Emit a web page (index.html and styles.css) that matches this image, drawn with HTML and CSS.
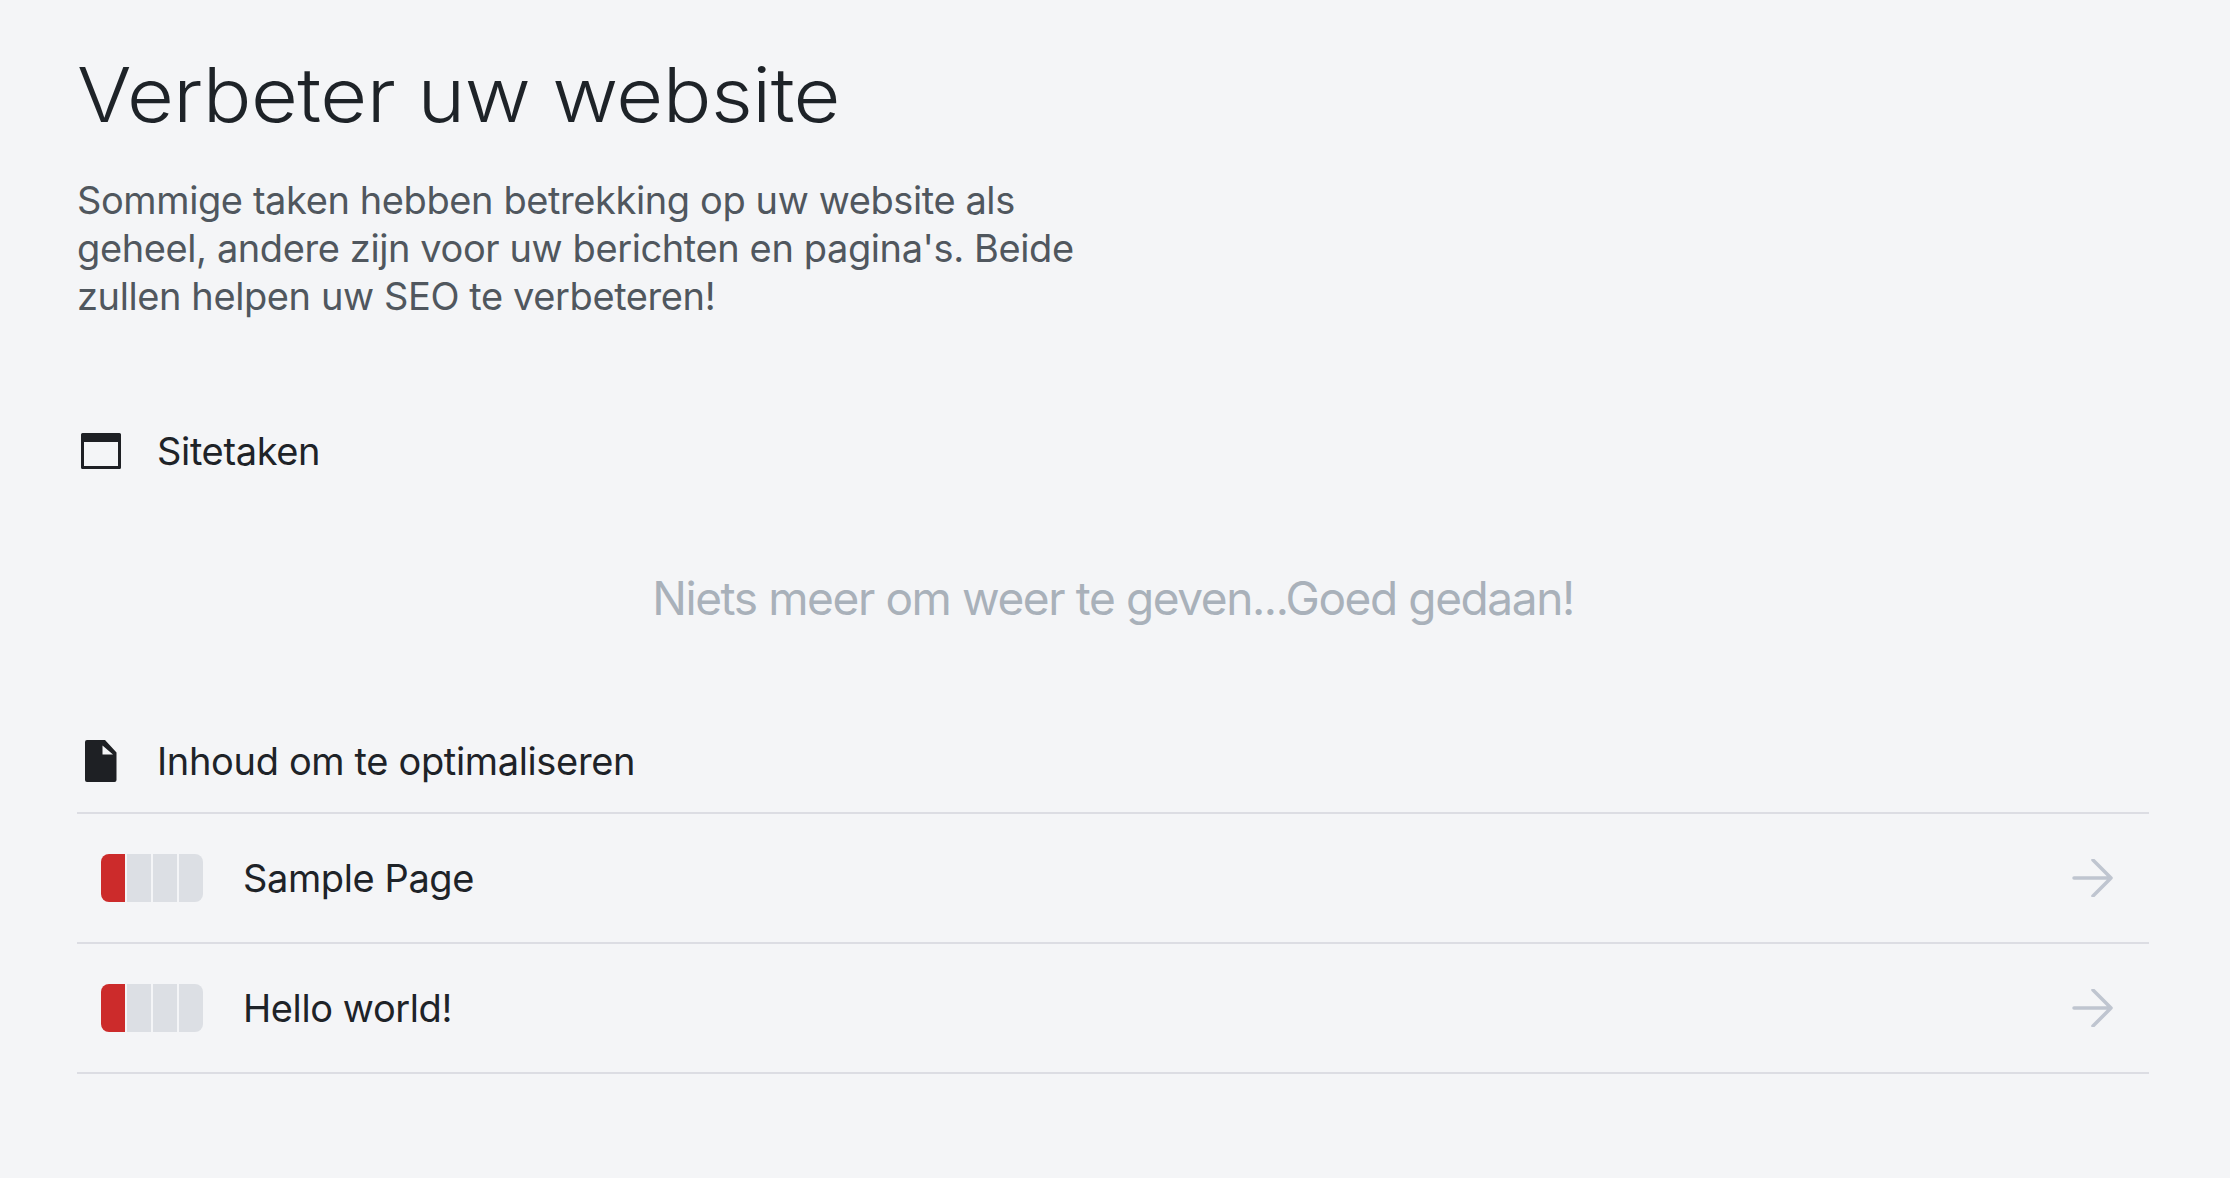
FILE: index.html
```html
<!DOCTYPE html>
<html lang="nl">
<head>
<meta charset="utf-8">
<title>Verbeter uw website</title>
<link rel="stylesheet" href="styles.css">
</head>
<body>
<main class="page">
  <h1 class="title">Verbeter uw website</h1>
  <p class="intro">Sommige taken hebben betrekking op uw website als geheel, andere zijn voor uw berichten en pagina's. Beide zullen helpen uw SEO te verbeteren!</p>

  <section class="section section-site">
    <h2 class="section-head">
      <span class="section-icon">
        <svg width="40" height="36" viewBox="0 0 40 36"><path fill="#1e2024" fill-rule="evenodd" d="M1.5 0h37A1.5 1.5 0 0 1 40 1.500v33a1.500 1.500 0 0 1-1.500 1.500h-37A1.500 1.500 0 0 1 0 34.500v-33A1.500 1.500 0 0 1 1.500 0zM3 9v24h34V9z"/></svg>
      </span>
      Sitetaken
    </h2>
    <p class="empty">Niets meer om weer te geven...Goed gedaan!</p>
  </section>

  <section class="section section-content">
    <h2 class="section-head section-head-ruled">
      <span class="section-icon section-icon-doc">
        <svg width="32" height="42" viewBox="0 0 32 42"><path fill="#1e2024" fill-rule="evenodd" d="M2 0h18l11.500 12.500V40a2 2 0 0 1-2 2H2a2 2 0 0 1-2-2V2a2 2 0 0 1 2-2zM17.500 5.500v9h10.500z"/></svg>
      </span>
      Inhoud om te optimaliseren
    </h2>
    <ul class="rows">
      <li class="row">
        <span class="score"><span class="seg seg-red"></span><span class="seg"></span><span class="seg"></span><span class="seg"></span></span>
        <span class="row-name">Sample Page</span>
        <svg class="arrow" width="42" height="38" viewBox="0 0 42 38"><path fill="none" stroke="#bfc5d0" stroke-width="3.5" stroke-linecap="round" stroke-linejoin="round" d="M2 19h37M21 1l18 18-18 18"/></svg>
      </li>
      <li class="row">
        <span class="score"><span class="seg seg-red"></span><span class="seg"></span><span class="seg"></span><span class="seg"></span></span>
        <span class="row-name">Hello world!</span>
        <svg class="arrow" width="42" height="38" viewBox="0 0 42 38"><path fill="none" stroke="#bfc5d0" stroke-width="3.5" stroke-linecap="round" stroke-linejoin="round" d="M2 19h37M21 1l18 18-18 18"/></svg>
      </li>
    </ul>
  </section>
</main>
</body>
</html>
```
FILE: styles.css
```css
* { box-sizing: border-box; }
html, body { margin: 0; height: 100%; }
body {
  background: #f4f5f7;
  color: #1e2328;
  font-family: Inter, "Liberation Sans", sans-serif;
  overflow: hidden;
}
.page { padding: 47px 81px 0 77px; }
.title {
  margin: 0;
  font-family: Inter, "Liberation Sans", sans-serif;
  font-size: 75px;
  font-weight: 300;
  line-height: 96px;
  letter-spacing: -0.5px;
  color: #1e2328;
  transform: scaleX(1.08);
  transform-origin: left center;
}
.intro {
  margin: 33px 0 0;
  width: 1000px;
  font-size: 38px;
  line-height: 48px;
  letter-spacing: -0.4px;
  color: #50575e;
}
.section-site { margin-top: 107px; }
.section-head {
  display: flex;
  align-items: center;
  margin: 0;
  font-size: 38px;
  line-height: 48px;
  font-weight: 400;
  letter-spacing: -0.35px;
}
.section-icon {
  flex: none;
  width: 80px;
  display: flex;
  justify-content: flex-start;
  padding-left: 4px;
}
.section-icon-doc { padding-left: 8px; }
.empty {
  margin: 95px 0 0;
  text-align: center;
  font-size: 46px;
  line-height: 56px;
  letter-spacing: -1.4px;
  color: #a9b1ba;
}
.section-content { margin-top: 111px; }
.section-head-ruled { padding-bottom: 27px; border-bottom: 2px solid #dcdde3; }
.rows { list-style: none; margin: 0; padding: 0; }
.row {
  display: flex;
  align-items: center;
  height: 130px;
  padding: 0 35px 0 24px;
  border-bottom: 2px solid #dcdde3;
}
.score {
  display: flex;
  gap: 2px;
  width: 102px;
  height: 48px;
  border-radius: 8px;
  overflow: hidden;
  flex: none;
}
.seg { flex: 1; background: #dcdfe4; }
.seg-red { background: #cc2b2b; }
.row-name { margin-left: 40px; flex: 1; font-size: 38px; line-height: 48px; letter-spacing: -0.4px; }
.arrow { flex: none; }
```
